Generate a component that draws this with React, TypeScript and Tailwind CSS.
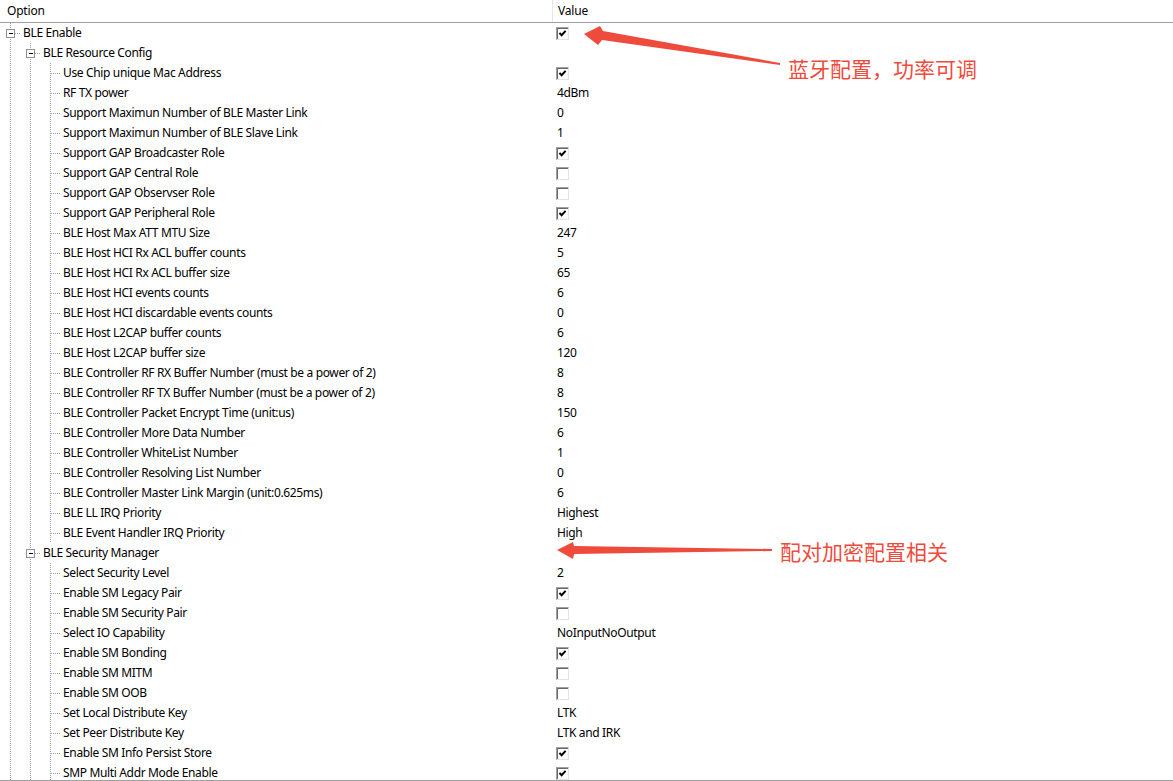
import React from "react";

type Row = { label: string; level: number; expander?: boolean; value?: string | boolean };

const rows: Row[] = [
  { label: "BLE Enable", level: 0, expander: true, value: true },
  { label: "BLE Resource Config", level: 1, expander: true },
  { label: "Use Chip unique Mac Address", level: 2, value: true },
  { label: "RF TX power", level: 2, value: "4dBm" },
  { label: "Support Maximun Number of BLE Master Link", level: 2, value: "0" },
  { label: "Support Maximun Number of BLE Slave Link", level: 2, value: "1" },
  { label: "Support GAP Broadcaster Role", level: 2, value: true },
  { label: "Support GAP Central Role", level: 2, value: false },
  { label: "Support GAP Observser Role", level: 2, value: false },
  { label: "Support GAP Peripheral Role", level: 2, value: true },
  { label: "BLE Host Max ATT MTU Size", level: 2, value: "247" },
  { label: "BLE Host HCI Rx ACL buffer counts", level: 2, value: "5" },
  { label: "BLE Host HCI Rx ACL buffer size", level: 2, value: "65" },
  { label: "BLE Host HCI events counts", level: 2, value: "6" },
  { label: "BLE Host HCI discardable events counts", level: 2, value: "0" },
  { label: "BLE Host L2CAP buffer counts", level: 2, value: "6" },
  { label: "BLE Host L2CAP buffer size", level: 2, value: "120" },
  { label: "BLE Controller RF RX Buffer Number (must be a power of 2)", level: 2, value: "8" },
  { label: "BLE Controller RF TX Buffer Number (must be a power of 2)", level: 2, value: "8" },
  { label: "BLE Controller Packet Encrypt Time (unit:us)", level: 2, value: "150" },
  { label: "BLE Controller More Data Number", level: 2, value: "6" },
  { label: "BLE Controller WhiteList Number", level: 2, value: "1" },
  { label: "BLE Controller Resolving List Number", level: 2, value: "0" },
  { label: "BLE Controller Master Link Margin (unit:0.625ms)", level: 2, value: "6" },
  { label: "BLE LL IRQ Priority", level: 2, value: "Highest" },
  { label: "BLE Event Handler IRQ Priority", level: 2, value: "High" },
  { label: "BLE Security Manager", level: 1, expander: true },
  { label: "Select Security Level", level: 2, value: "2" },
  { label: "Enable SM Legacy Pair", level: 2, value: true },
  { label: "Enable SM Security Pair", level: 2, value: false },
  { label: "Select IO Capability", level: 2, value: "NoInputNoOutput" },
  { label: "Enable SM Bonding", level: 2, value: true },
  { label: "Enable SM MITM", level: 2, value: false },
  { label: "Enable SM OOB", level: 2, value: false },
  { label: "Set Local Distribute Key", level: 2, value: "LTK" },
  { label: "Set Peer Distribute Key", level: 2, value: "LTK and IRK" },
  { label: "Enable SM Info Persist Store", level: 2, value: true },
  { label: "SMP Multi Addr Mode Enable", level: 2, value: true },
];

const DOT = "#a0a0a0";

function TreeCell({ own, expander }: { own: boolean; expander?: boolean }) {
  return (
    <svg width="20" height="20" className="shrink-0 block" shapeRendering="crispEdges">
      <line x1="10.5" y1="0" x2="10.5" y2="20" stroke={DOT} strokeWidth="1" strokeDasharray="1 1" />
      {own && (
        <line x1="11" y1="10.5" x2="20" y2="10.5" stroke={DOT} strokeWidth="1" strokeDasharray="1 1" />
      )}
      {own && expander && (
        <g>
          <rect x="6.5" y="6.5" width="8" height="8" fill="#fff" stroke="#919191" strokeWidth="1" />
          <line x1="8.5" y1="10.5" x2="13" y2="10.5" stroke="#000" strokeWidth="1" />
        </g>
      )}
    </svg>
  );
}

function Checkbox({ checked }: { checked: boolean }) {
  return (
    <div className="w-[13px] h-[13px] bg-white border-t border-l border-[#a0a0a0] border-b border-r border-b-[#e3e3e3] border-r-[#e3e3e3] shadow-[inset_1px_1px_0_#696969] flex items-center justify-center">
      {checked && (
        <svg width="11" height="11" viewBox="0 0 11 11" className="block">
          <path d="M2.5 4.8 L4.6 7.2 L8.6 2.8" fill="none" stroke="#000" strokeWidth="2" />
        </svg>
      )}
    </div>
  );
}

function TreeRow({ row }: { row: Row }) {
  const cells = [];
  for (let c = 0; c <= row.level; c++) {
    cells.push(<TreeCell key={c} own={c === row.level} expander={row.expander} />);
  }
  return (
    <div className="flex h-5 items-center">
      <div className="w-[553px] shrink-0 flex items-center h-5">
        {cells}
        <span className="pl-[3px] whitespace-nowrap leading-5 tracking-[-0.35px]">{row.label}</span>
      </div>
      <div className="flex-1 flex items-center h-5 pl-[3px]">
        {typeof row.value === "boolean" ? (
          <Checkbox checked={row.value} />
        ) : row.value !== undefined ? (
          <span className="pl-[1px] leading-5 whitespace-nowrap tracking-[-0.35px]">{row.value}</span>
        ) : null}
      </div>
    </div>
  );
}

export default function App() {
  return (
    <div
      className="relative w-[1173px] h-[781px] bg-white overflow-hidden flex flex-col text-[12px] text-black"
      style={{ fontFamily: '"Noto Sans", "Open Sans", sans-serif' }}
    >
      <div className="flex h-[23px] border-b border-[#a0a0a0] shrink-0">
        <div className="w-[553px] shrink-0 border-r border-[#e5e5e5] pl-[7px] flex items-center tracking-[-0.2px]">Option</div>
        <div className="flex-1 pl-[5px] flex items-center tracking-[-0.2px]">Value</div>
      </div>
      <div className="flex-1 overflow-hidden">
        {rows.map((r, i) => (
          <TreeRow key={i} row={r} />
        ))}
      </div>
      <div className="h-px bg-[#a0a0a0] shrink-0" />

      <svg className="absolute left-0 top-0 pointer-events-none" width="1173" height="781">
        <polygon
          points="584,34 600,26 603,31 780,63 780,65 602,40 598,45"
          fill="#ef4b3d"
        />
        <polygon
          points="557,550 573,542 574,546 772,549 772,551 574,554 573,559"
          fill="#ef4b3d"
        />
      </svg>
      <div
        className="absolute left-[788px] top-[54px] text-[21px] leading-[28px] text-[#ef4b3d] whitespace-nowrap"
        style={{ fontFamily: '"Noto Sans CJK SC", sans-serif' }}
      >
        蓝牙配置，功率可调
      </div>
      <div
        className="absolute left-[780px] top-[537px] text-[21px] leading-[28px] text-[#ef4b3d] whitespace-nowrap"
        style={{ fontFamily: '"Noto Sans CJK SC", sans-serif' }}
      >
        配对加密配置相关
      </div>
    </div>
  );
}
